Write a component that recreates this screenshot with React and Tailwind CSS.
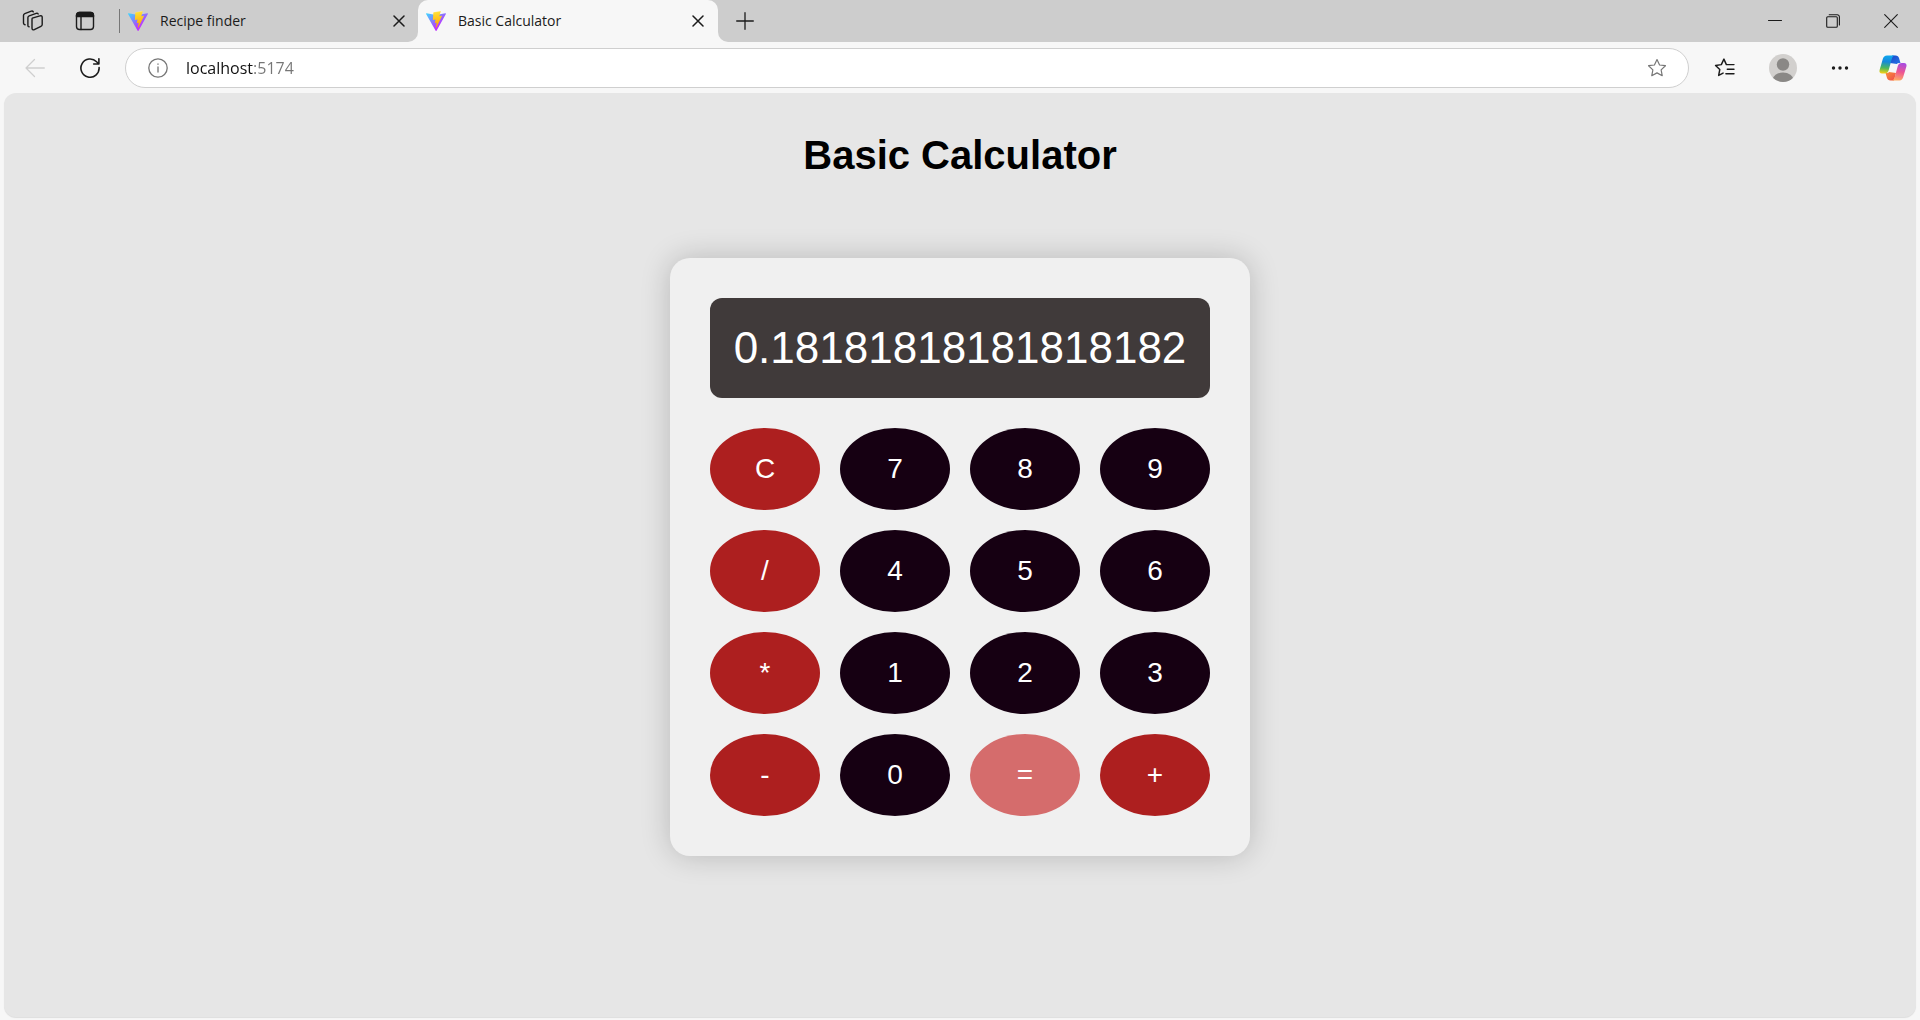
import React, { useState } from "react";

const uiFont = "font-['Open_Sans','Noto_Sans',sans-serif]";

function ViteLogo({ id }) {
  return (
    <svg viewBox="0 0 256 257" className="h-5 w-5 shrink-0" aria-hidden="true">
      <defs>
        <linearGradient id={`${id}-a`} x1="-.828%" x2="57.636%" y1="7.652%" y2="78.411%">
          <stop offset="0%" stopColor="#41D1FF" />
          <stop offset="100%" stopColor="#BD34FE" />
        </linearGradient>
        <linearGradient id={`${id}-b`} x1="43.376%" x2="50.316%" y1="2.242%" y2="89.03%">
          <stop offset="0%" stopColor="#FFEA83" />
          <stop offset="8.333%" stopColor="#FFDD35" />
          <stop offset="100%" stopColor="#FFA800" />
        </linearGradient>
      </defs>
      <path
        fill={`url(#${id}-a)`}
        d="M255.153 37.938L134.897 252.976c-2.483 4.44-8.862 4.466-11.382.048L.875 37.958c-2.746-4.814 1.371-10.646 6.827-9.67l120.385 21.517a6.537 6.537 0 0 0 2.322-.004l117.867-21.483c5.438-.991 9.574 4.796 6.877 9.62Z"
      />
      <path
        fill={`url(#${id}-b)`}
        d="M185.432.063L96.44 17.501a3.268 3.268 0 0 0-2.634 3.014l-5.474 92.456a3.268 3.268 0 0 0 3.997 3.378l24.777-5.718c2.318-.535 4.413 1.507 3.936 3.838l-7.361 36.047c-.495 2.426 1.782 4.5 4.151 3.78l15.304-4.649c2.372-.72 4.652 1.36 4.15 3.788l-11.698 56.621c-.732 3.542 3.979 5.473 5.943 2.437l1.313-2.028l72.516-144.72c1.215-2.423-.88-5.186-3.54-4.672l-25.505 4.922c-2.396.462-4.435-1.77-3.759-4.114l16.646-57.705c.677-2.35-1.37-4.583-3.769-4.113Z"
      />
    </svg>
  );
}

function Icon({ size = "h-6 w-6", children, viewBox = "0 0 24 24", width = 1.3 }) {
  return (
    <svg
      viewBox={viewBox}
      className={`${size} shrink-0`}
      fill="none"
      stroke="currentColor"
      strokeWidth={width}
      strokeLinecap="round"
      strokeLinejoin="round"
      aria-hidden="true"
    >
      {children}
    </svg>
  );
}

function CloseGlyph() {
  return (
    <Icon size="h-3 w-3" viewBox="0 0 12 12" width={1.5}>
      <path d="M1 1l10 10M11 1L1 11" />
    </Icon>
  );
}

function Workspaces() {
  return (
    <Icon width={1.4}>
      <path d="M11.3 9.2l7.6-2.4c1.2-.4 2.3.3 2.3 1.5v7.2c0 .8-.5 1.500-1.300 1.800l-6.600 3.400c-1.200.5-2.300-.2-2.300-1.400v-8.300c0-.8.1-1.500.3-1.800z" />
      <path d="M8.2 17.8l-.6-.2c-.5-.2-.7-.6-.7-1.2V8.6c0-.8.5-1.5 1.3-1.8l7-2.5c.9-.3 1.6 0 2 .7" />
      <path d="M4.2 15.8l-1-.5c-.5-.2-.7-.6-.7-1.2V6.5c0-.8.5-1.5 1.3-1.8l6.5-2.5c.9-.3 1.6 0 2 .6" />
    </Icon>
  );
}

function TabActions() {
  return (
    <Icon size="h-5 w-5" viewBox="0 0 20 20" width={1.4}>
      <rect x="1.5" y="1.5" width="17" height="17" rx="3" />
      <path d="M1.5 5.500v-1a3 3 0 0 1 3-3h11a3 3 0 0 1 3 3v1z" fill="currentColor" />
      <path d="M6 6v12.5" />
    </Icon>
  );
}

const starPath =
  "M12 2.8l2.8 5.9 6.4.8-4.7 4.5 1.2 6.4-5.7-3.1-5.7 3.1 1.2-6.4-4.7-4.5 6.4-.8z";

function Copilot() {
  return (
    <svg viewBox="0 0 28 26" className="h-[26px] w-7 shrink-0" aria-hidden="true">
      <defs>
        <linearGradient id="cp-blue" x1="0.5" y1="0" x2="0.4" y2="1">
          <stop offset="0" stopColor="#0fa8ee" />
          <stop offset="0.35" stopColor="#1689dc" />
          <stop offset="0.7" stopColor="#4db85c" />
          <stop offset="1" stopColor="#f2cf14" />
        </linearGradient>
        <linearGradient id="cp-pink" x1="0.6" y1="0" x2="0.4" y2="1">
          <stop offset="0" stopColor="#a94be0" />
          <stop offset="0.5" stopColor="#ee5692" />
          <stop offset="1" stopColor="#ffac62" />
        </linearGradient>
        <linearGradient id="cp-navy" x1="0" y1="0" x2="1" y2="1">
          <stop offset="0" stopColor="#1a45c8" />
          <stop offset="1" stopColor="#2878e8" />
        </linearGradient>
        <linearGradient id="cp-red" x1="0" y1="0" x2="1" y2="1">
          <stop offset="0" stopColor="#f9913a" />
          <stop offset="1" stopColor="#ee4a4a" />
        </linearGradient>
      </defs>
      <path d="M13 .5h3.500c2 0 3 .9 3.500 2.500L21.500 8H20c-1 0-1.700.3-2.200 1L11 8z" fill="url(#cp-navy)" />
      <path d="M15 25.500h-3.500c-2 0-3-.9-3.500-2.500L6.500 18H8c1 0 1.700-.3 2.200-1l6.800 1z" fill="url(#cp-red)" />
      <path d="M8 .5h8.500c-2 0-3 1-3.600 3L9.600 15.500c-.7 2-1.800 3-4 3H3c-2 0-3-1.500-2.400-3.600L3.800 4C4.500 1.700 5.800.5 8 .5z" fill="url(#cp-blue)" />
      <path d="M20.500 25.500H12c2 0 3-1 3.600-3L18.800 11c.6-2 1.800-3 4-3H25c2 0 3 1.500 2.400 3.600L24.200 22c-.7 2.300-1.700 3.500-3.700 3.500z" fill="url(#cp-pink)" />
    </svg>
  );
}

function TabStrip() {
  return (
    <div className={`flex h-[42px] bg-[#f7f7f7] text-sm text-[#1b1b1b] ${uiFont}`}>
      <div className="flex w-[418px] shrink-0 items-center rounded-br-[10px] bg-[#cdcdcd] pl-[21px]">
        <button aria-label="Workspaces"><Workspaces /></button>
        <button aria-label="Tab actions" className="ml-[30px]"><TabActions /></button>
        <div className="ml-6 h-6 w-px bg-[#777777]" />
        <button className="ml-2 flex flex-1 items-center gap-3 text-left">
          <ViteLogo id="recipe" />
          <span>Recipe finder</span>
        </button>
        <button aria-label="Close Recipe finder" className="mr-[13px]"><CloseGlyph /></button>
      </div>
      <div className="w-[300px] shrink-0 bg-linear-to-b from-[#cdcdcd] from-50% to-[#f7f7f7] to-50%">
        <div className="flex h-full items-center rounded-t-[10px] bg-[#f7f7f7] pl-2">
          <button className="flex flex-1 items-center gap-3 text-left">
            <ViteLogo id="calc" />
            <span>Basic Calculator</span>
          </button>
          <button aria-label="Close Basic Calculator" className="mr-3.5"><CloseGlyph /></button>
        </div>
      </div>
      <div className="flex flex-1 items-center rounded-bl-[10px] bg-[#cdcdcd] pl-[18px]">
        <button aria-label="New tab">
          <Icon size="h-[18px] w-[18px]" viewBox="0 0 18 18">
            <path d="M9 .7v16.6M.7 9h16.6" />
          </Icon>
        </button>
        <div className="ml-auto flex items-center gap-11 pr-[22px]">
          <button aria-label="Minimize">
            <Icon size="h-3.5 w-3.5" viewBox="0 0 14 14" width={1.1}><path d="M.5 6.5h13" /></Icon>
          </button>
          <button aria-label="Restore">
            <Icon size="h-3.5 w-3.5" viewBox="0 0 14 14" width={1.1}>
              <rect x=".7" y="2.7" width="10.6" height="10.6" rx="1" />
              <path d="M3.2.7h8a2.200 2.200 0 0 1 2.200 2.200v8" />
            </Icon>
          </button>
          <button aria-label="Close window">
            <Icon size="h-3.5 w-3.5" viewBox="0 0 14 14" width={1.1}>
              <path d="M.7.7l12.6 12.6M13.3.7L.7 13.3" />
            </Icon>
          </button>
        </div>
      </div>
    </div>
  );
}

function Toolbar() {
  return (
    <div className="flex h-[51px] items-center bg-[#f7f7f7] pl-[25px]">
      <button aria-label="Back" className="text-[#cfcfcf]" disabled>
        <Icon size="h-5 w-5" viewBox="0 0 20 20"><path d="M19.3 10H1M9.5 1.500L1 10l8.500 8.500" /></Icon>
      </button>
      <button aria-label="Refresh" className="ml-[35px] text-[#1b1b1b]">
        <Icon size="h-5 w-5" viewBox="0 0 20 20" width={1.6}>
          <path d="M19.1 9.500A9.100 9.100 0 1 1 16.600 3.800l2 2M18.900.8v5.200h-5.200" />
        </Icon>
      </button>
      <form
        className="ml-[25px] flex h-10 flex-1 items-center rounded-full border border-[#cfcfcf] bg-white pr-5 pl-[22px]"
        onSubmit={(e) => e.preventDefault()}
      >
        <button type="button" aria-label="Site information" className="text-[#767676]">
          <Icon size="h-5 w-5" viewBox="0 0 20 20">
            <circle cx="10" cy="10" r="9.2" />
            <path d="M10 9v5M10 6v.3" />
          </Icon>
        </button>
        <input
          aria-label="Address"
          defaultValue="localhost:5174"
          className={`ml-[18px] flex-1 bg-[linear-gradient(90deg,#111111_67px,#767676_67px)] bg-clip-text text-base text-transparent outline-none ${uiFont}`}
        />
        <button type="button" aria-label="Add to favorites" className="text-[#767676]">
          <Icon size="h-[22px] w-[22px]"><path d={starPath} /></Icon>
        </button>
      </form>
      <div className="ml-[25px] flex items-center pr-[13px] text-[#1b1b1b]">
        <button aria-label="Favorites">
          <Icon size="h-[22px] w-[22px]" width={1.6}>
            <path d="M14 8.300h-.5L10.800 2.300 8 8.300l-6.300.9 4.600 4.500-1.200 6.400 4.800-2.500M14 8.300h7.800M14.500 13.300h7.300M13 18.300h8.800" />
          </Icon>
        </button>
        <button aria-label="Profile" className="ml-[33px]">
          <svg viewBox="0 0 28 28" className="h-7 w-7" aria-hidden="true">
            <clipPath id="avatar"><circle cx="14" cy="14" r="14" /></clipPath>
            <g clipPath="url(#avatar)">
              <rect width="28" height="28" fill="#d2d0ce" />
              <circle cx="14" cy="10.5" r="6.2" fill="#8a8886" />
              <ellipse cx="14" cy="26" rx="10.5" ry="7.5" fill="#8a8886" />
            </g>
          </svg>
        </button>
        <button aria-label="Settings and more" className="ml-[34px]">
          <svg viewBox="0 0 18 18" className="h-[18px] w-[18px]" fill="currentColor" aria-hidden="true">
            <circle cx="2.5" cy="9" r="1.7" />
            <circle cx="9" cy="9" r="1.7" />
            <circle cx="15.5" cy="9" r="1.7" />
          </svg>
        </button>
        <button aria-label="Copilot" className="ml-[30px]"><Copilot /></button>
      </div>
    </div>
  );
}

const keys = ["C", "7", "8", "9", "/", "4", "5", "6", "*", "1", "2", "3", "-", "0", "=", "+"];

const keyColor = (key) => {
  if (key === "=") return "bg-[#d56c6c]";
  return /\d/.test(key) ? "bg-[#160012]" : "bg-[#ad1f1f]";
};

function compute(a, op, b) {
  if (op === "+") return a + b;
  if (op === "-") return a - b;
  if (op === "*") return a * b;
  return a / b;
}

function Calculator() {
  const [state, setState] = useState({ shown: "0.18181818181818182", left: null, op: null, fresh: true });

  const press = (key) =>
    setState((s) => {
      if (key === "C") return { shown: "0", left: null, op: null, fresh: true };
      if (/\d/.test(key)) return { ...s, shown: s.fresh ? key : s.shown + key, fresh: false };
      const value = s.op && !s.fresh ? compute(s.left, s.op, Number(s.shown)) : Number(s.shown);
      return { shown: String(value), left: value, op: key === "=" ? null : key, fresh: true };
    });

  return (
    <section className="w-full max-w-[580px] rounded-[20px] bg-[#f0f0f0] p-10 shadow-[0_0_30px_rgba(0,0,0,0.2)]">
      <output className="flex h-[100px] items-center justify-center overflow-hidden rounded-xl bg-[#403a3a] px-5 text-[44px] text-white">
        {state.shown}
      </output>
      <div className="mt-[30px] grid grid-cols-4 gap-5">
        {keys.map((key) => (
          <button
            key={key}
            onClick={() => press(key)}
            className={`h-[82px] rounded-[50%] text-[28px] text-white ${keyColor(key)}`}
          >
            {key}
          </button>
        ))}
      </div>
    </section>
  );
}

export default function App() {
  return (
    <div className="flex min-h-screen flex-col bg-[#f7f7f7]">
      <header>
        <TabStrip />
        <Toolbar />
      </header>
      <main className="mx-1 mb-[3px] flex flex-1 flex-col items-center rounded-xl bg-[#e6e6e6] pt-[39px] font-['Liberation_Sans',Arial,sans-serif] shadow-[0_1px_1px_rgba(0,0,0,0.1)]">
        <h1 className="mb-20 text-[40px] leading-[46px] font-bold text-black">Basic Calculator</h1>
        <Calculator />
      </main>
    </div>
  );
}
